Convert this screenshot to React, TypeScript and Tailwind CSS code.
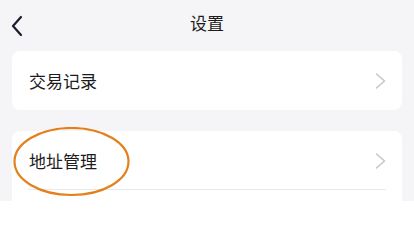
const Chevron = () => (
  <svg width="11" height="16" viewBox="0 0 11 16" fill="none">
    <path d="M1.5 1 L9.5 8 L1.5 15" stroke="#c4c4c8" strokeWidth="1.5" strokeLinecap="round" strokeLinejoin="round" />
  </svg>
);

const Row = ({ label, divider }: { label: string; divider?: boolean }) => (
  <div className="relative flex h-[59px] items-center justify-between pl-[17px] pr-[16px]">
    <span className="text-[17px] text-[#1c1c1e]">{label}</span>
    <Chevron />
    {divider && <div className="absolute bottom-0 left-[16px] right-[16px] h-px bg-[#e8e8ea]" />}
  </div>
);

export default function App() {
  return (
    <div
      className="h-[201px] w-[414px] overflow-hidden bg-[#f5f5f7]"
      style={{ fontFamily: '"Noto Sans CJK SC", "Noto Sans", sans-serif' }}
    >
      <div className="relative flex h-[51px] items-center justify-center">
        <svg className="absolute left-[10px] top-[15px]" width="14" height="22" viewBox="0 0 14 22" fill="none">
          <path d="M11 2 L3 11 L11 20" stroke="#1c1c2e" strokeWidth="2.2" strokeLinecap="round" strokeLinejoin="round" />
        </svg>
        <span className="text-[17px] text-[#1c1c1e] pb-[5px]">设置</span>
      </div>
      <div className="mx-[12px] rounded-[8px] bg-white">
        <Row label="交易记录" />
      </div>
      <div className="relative mx-[12px] mt-[21px] rounded-[8px] bg-white">
        <Row label="地址管理" divider />
        <svg className="pointer-events-none absolute left-[1px] top-[-4px]" width="118" height="71" viewBox="0 0 118 71">
          <ellipse cx="58.5" cy="34.5" rx="57" ry="33.5" fill="none" stroke="#e4801c" strokeWidth="2.2" />
        </svg>
        <div className="h-[20px]" />
      </div>
    </div>
  );
}
